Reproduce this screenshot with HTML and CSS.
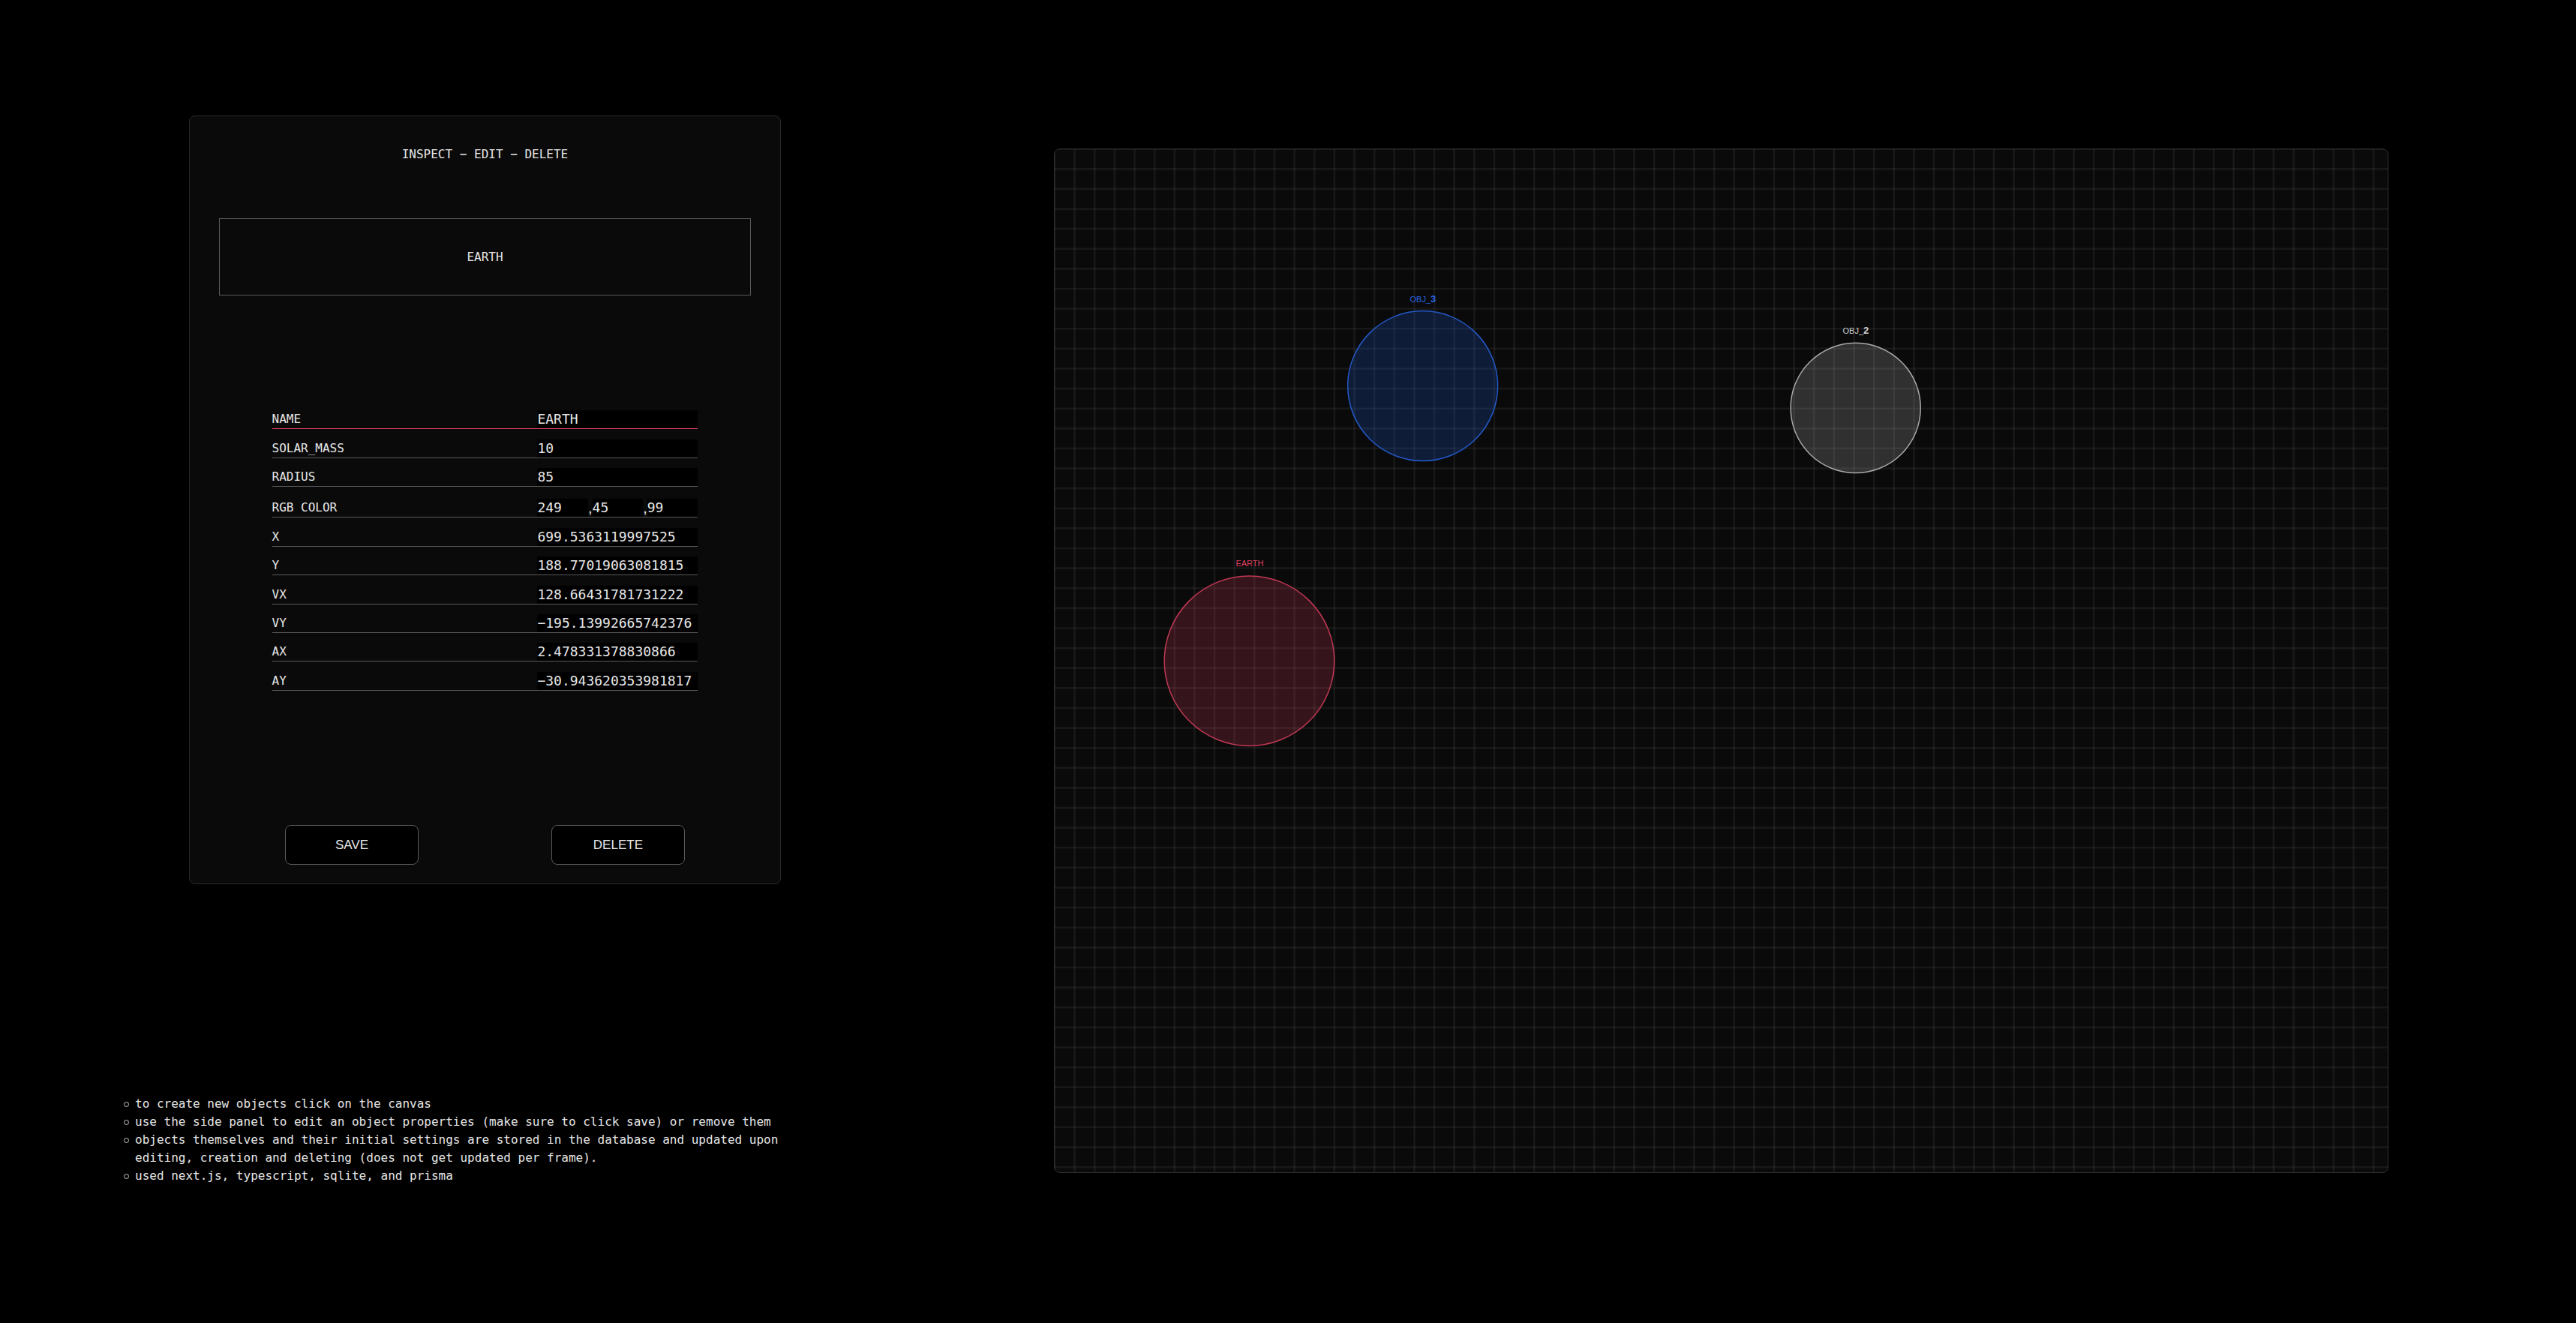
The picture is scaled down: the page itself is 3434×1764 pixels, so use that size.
FILE: index.html
```html
<!DOCTYPE html>
<html lang="en">
<head>
  <meta charset="utf-8">
  <meta name="viewport" content="width=device-width, initial-scale=1">
  <title>Orbit sandbox</title>
  <link rel="stylesheet" href="styles.css">
</head>
<body>
  <main class="page">
    <div class="side">
      <form class="panel">
        <h1 class="panel-title">INSPECT − EDIT − DELETE</h1>
        <div class="selected">EARTH</div>

        <table class="props">
          <tr class="active">
            <th scope="row"><label for="name">NAME</label></th>
            <td><input class="field" id="name" type="text" value="EARTH"></td>
          </tr>
          <tr>
            <th scope="row"><label for="mass">SOLAR_MASS</label></th>
            <td><input class="field" id="mass" type="text" value="10"></td>
          </tr>
          <tr>
            <th scope="row"><label for="radius">RADIUS</label></th>
            <td><input class="field" id="radius" type="text" value="85"></td>
          </tr>
          <tr class="color-row">
            <th scope="row"><label for="red">RGB COLOR</label></th>
            <td>
              <div class="rgb">
                <input class="field" id="red" type="text" value="249">
                <span class="comma">,</span>
                <input class="field" type="text" value="45" aria-label="Green">
                <span class="comma">,</span>
                <input class="field" type="text" value="99" aria-label="Blue">
              </div>
            </td>
          </tr>
          <tr>
            <th scope="row"><label for="x">X</label></th>
            <td><input class="field" id="x" type="text" value="699.5363119997525"></td>
          </tr>
          <tr>
            <th scope="row"><label for="y">Y</label></th>
            <td><input class="field" id="y" type="text" value="188.77019063081815"></td>
          </tr>
          <tr>
            <th scope="row"><label for="vx">VX</label></th>
            <td><input class="field" id="vx" type="text" value="128.66431781731222"></td>
          </tr>
          <tr>
            <th scope="row"><label for="vy">VY</label></th>
            <td><input class="field" id="vy" type="text" value="−195.13992665742376"></td>
          </tr>
          <tr>
            <th scope="row"><label for="ax">AX</label></th>
            <td><input class="field" id="ax" type="text" value="2.478331378830866"></td>
          </tr>
          <tr>
            <th scope="row"><label for="ay">AY</label></th>
            <td><input class="field" id="ay" type="text" value="−30.943620353981817"></td>
          </tr>
        </table>

        <div class="actions">
          <button class="btn" type="button">SAVE</button>
          <button class="btn" type="button">DELETE</button>
        </div>
      </form>

      <ul class="notes">
        <li>to create new objects click on the canvas</li>
        <li>use the side panel to edit an object properties (make sure to click save) or remove them</li>
        <li>objects themselves and their initial settings are stored in the database and updated upon editing, creation and deleting (does not get updated per frame).</li>
        <li>used next.js, typescript, sqlite, and prisma</li>
      </ul>
    </div>

    <div class="space">
      <svg class="space-view" viewBox="1 1 1777 1364" role="img" aria-label="Objects on the canvas">
        <!-- each thick dashed stroke paints one full set of parallel grid lines -->
        <path class="grid-columns" d="M0 683H1779"/>
        <path class="grid-rows" d="M889.500 0V1366"/>

        <g class="body-blue">
          <circle cx="491.700" cy="316.600" r="100"/>
          <text x="492" y="205">OBJ_<tspan class="digit">3</tspan></text>
        </g>
        <g class="body-gray">
          <circle cx="1068.800" cy="346" r="86.600"/>
          <text x="1069" y="247">OBJ_<tspan class="digit">2</tspan></text>
        </g>
        <g class="body-red">
          <circle cx="260.500" cy="683.300" r="113.300"/>
          <text x="261" y="557">EARTH</text>
        </g>
      </svg>
    </div>
  </main>
</body>
</html>
```

FILE: styles.css
```css
*,
*::before,
*::after {
  box-sizing: border-box;
}

body {
  margin: 0;
  background: #000;
  color: #e6e6e6;
  font: 16px/24px "DejaVu Sans Mono", monospace;
}

.page {
  display: flex;
  justify-content: space-between;
  align-items: flex-start;
  min-height: 100vh;
  padding: 154px 250px 100px 164px;
}

.side {
  display: flex;
  flex-direction: column;
  align-items: center;
  gap: 281px;
  width: 28.1vw;
}

.panel {
  display: flex;
  flex-direction: column;
  align-items: center;
  width: 23vw;
  padding: 39px 39px 25px;
  border: 1px solid #2a2a2a;
  border-radius: 8px;
  background: #0a0a0a;
}

.panel-title {
  margin: 0 0 73px;
  font-size: 16px;
  font-weight: 400;
}

.selected {
  display: flex;
  align-items: center;
  justify-content: center;
  width: 100%;
  height: 103px;
  border: 1px solid #5a5a5a;
}

.props {
  width: 80%;
  height: 387px;
  margin: 140px 0 179px;
  border-collapse: collapse;
  table-layout: fixed;
}

.props th,
.props td {
  padding: 0;
  border-bottom: 1px solid #5a5a5a;
  vertical-align: bottom;
}

.props th {
  font-weight: 400;
  text-align: left;
}

.props td {
  width: 214px;
}

.props label,
.field {
  display: block;
}

.props .active th,
.props .active td {
  border-bottom-color: #e0405f;
}

.props .color-row td,
.props .color-row th {
  height: 41px;
}

.field {
  width: 100%;
  min-width: 0;
  height: 24px;
  padding: 0;
  border: 0;
  background: #000;
  color: inherit;
  font: 18px/24px "DejaVu Sans Mono", monospace;
}

.rgb {
  display: flex;
}

.comma {
  height: 24px;
  font: 20px/24px "Liberation Sans", Arial, sans-serif;
}

.actions {
  display: flex;
  justify-content: space-around;
  width: 100%;
}

.btn {
  width: 25%;
  height: 53px;
  padding: 0;
  border: 1px solid #5a5a5a;
  border-radius: 8px;
  background: #000;
  color: inherit;
  font: 17px/24px "Liberation Sans", Arial, sans-serif;
}

.notes {
  align-self: flex-start;
  margin: 0;
  padding: 0 40px 0 1px;
  list-style: none;
}

.notes li {
  display: flex;
  gap: 8px;
}

.notes li::before {
  content: "";
  flex: none;
  width: 7px;
  height: 7px;
  margin-top: 9px;
  border: 1px solid #c8c8c8;
  border-radius: 50%;
}

.space {
  width: 51.8vw;
  margin-top: 44px;
  overflow: hidden;
  border: 1px solid #303030;
  border-radius: 8px;
  background: #0a0a0a;
}

.space-view {
  display: block;
  width: 100%;
  height: auto;
  font: 11px "Liberation Sans", Arial, sans-serif;
  text-anchor: middle;
}

.space-view .digit {
  font-size: 13px;
  font-weight: 700;
}

.grid-columns,
.grid-rows {
  fill: none;
  stroke: #fff;
  stroke-opacity: 0.06;
}

.grid-columns {
  stroke-width: 1366px;
  stroke-dasharray: 2.660 23.983;
  stroke-dashoffset: 0.430;
}

.grid-rows {
  stroke-width: 1779px;
  stroke-dasharray: 2.660 23.960;
  stroke-dashoffset: 0.630;
}

.space-view circle {
  fill-opacity: 0.2;
  stroke-width: 1.500px;
}

.body-blue circle {
  fill: #1e64eb;
  stroke: #2459c8;
}

.body-blue text {
  fill: #2a66e6;
}

.body-gray circle {
  fill: #c8c8c8;
  stroke: #a8a8a8;
}

.body-gray text {
  fill: #d0d0d0;
}

.body-red circle {
  fill: #e13c5f;
  stroke: #c03854;
}

.body-red text {
  fill: #e04264;
}
```
